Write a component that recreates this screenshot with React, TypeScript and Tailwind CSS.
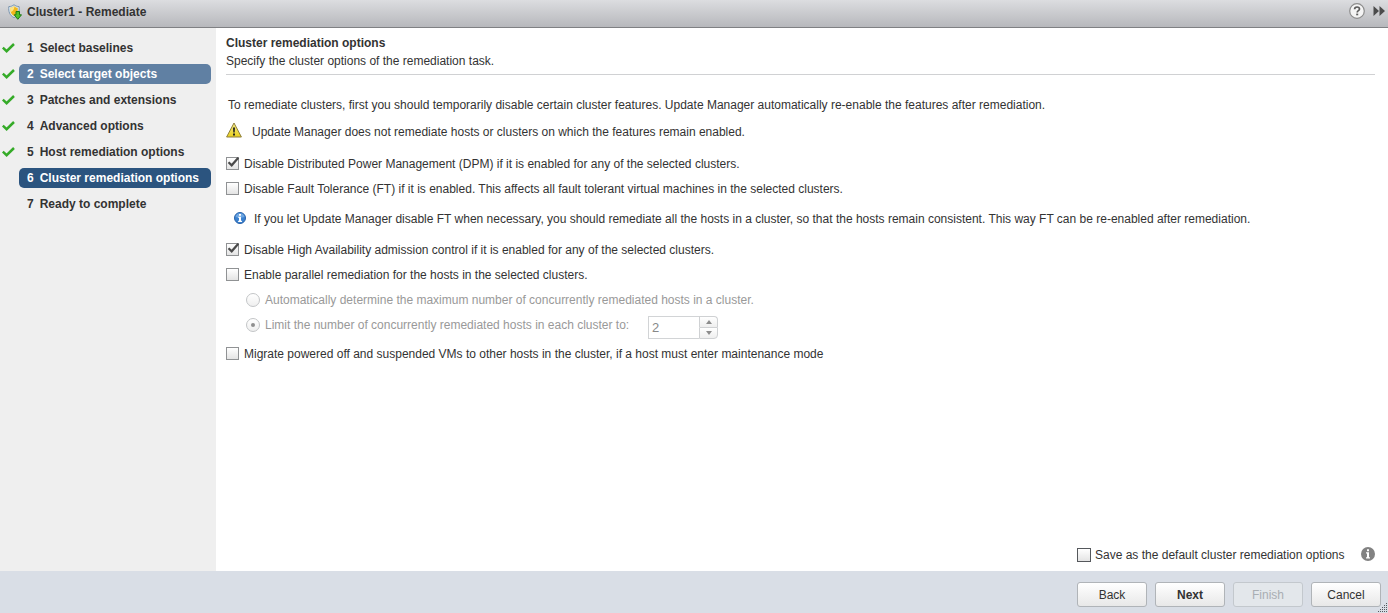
import { useState, type ReactNode } from "react";

const steps = [
  { label: "Select baselines", done: true },
  { label: "Select target objects", done: true, hover: true },
  { label: "Patches and extensions", done: true },
  { label: "Advanced options", done: true },
  { label: "Host remediation options", done: true },
  { label: "Cluster remediation options", done: false, current: true },
  { label: "Ready to complete", done: false },
];

function ShieldIcon() {
  return (
    <svg width="14" height="16" viewBox="0 0 14 16" aria-hidden="true">
      <path d="M6 0.7 C4.6 2 2.8 2.5 0.8 2.6 C0.3 7.5 1.6 11.4 6 13.6 C10.4 11.4 11.6 7.5 11.1 2.6 C9.2 2.5 7.3 2 6 0.7Z" fill="#dbe8f3" stroke="#7b95ad" strokeWidth="1" />
      <path d="M6 2.2 C5 3.1 3.6 3.6 2.1 3.8 C1.9 7.4 2.9 10.3 6 12.1 C9 10.3 10 7.4 9.8 3.8 C8.4 3.6 7 3.1 6 2.2Z" fill="#f2b81c" />
      <path d="M6 2.2 C5 3.1 3.6 3.6 2.1 3.8 L2.2 8 C4 8.5 6 6 6.5 2.6Z" fill="#fbe58a" />
      <path d="M8 7.5 H11.5 V10.8 H13.5 L9.8 15.3 L6.2 10.8 H8Z" fill="#4fc22c" stroke="#1d7a14" strokeWidth="1" />
    </svg>
  );
}

function DoneIcon() {
  return (
    <svg width="13" height="10" viewBox="0 0 13 10" className="block" aria-hidden="true">
      <path d="M0.8 4.6 L4.6 8.2 L12 1" fill="none" stroke="#35ab28" strokeWidth="2.5" />
    </svg>
  );
}

function WarningIcon() {
  return (
    <svg width="16" height="16" viewBox="0 0 16 16" className="mb-1 shrink-0" aria-hidden="true">
      <defs>
        <linearGradient id="warn" x1="0" y1="0" x2="0" y2="1">
          <stop offset="0" stopColor="#f6ee8e" />
          <stop offset="1" stopColor="#e9cf1c" />
        </linearGradient>
      </defs>
      <path d="M8 1 L15.4 15 H0.6Z" fill="url(#warn)" stroke="#8f7f3a" strokeWidth="1" strokeLinejoin="round" />
      <path d="M7 5.5 H9 L8.7 10.5 H7.300Z M7 11.500 H9 V13.500 H7Z" fill="#222" />
    </svg>
  );
}

function BlueInfoIcon() {
  return (
    <svg width="12" height="12" viewBox="0 0 12 12" className="mb-0.5 shrink-0" aria-hidden="true">
      <circle cx="6" cy="6" r="5.5" fill="#3b82d0" stroke="#2a62a8" strokeWidth="1" />
      <path d="M1.5 5 A4.6 4.6 0 0 1 10.5 5 Q6 6.5 1.5 5Z" fill="#6da6e2" />
      <path d="M5 2 H7 V3.7 H5Z M4.2 4.7 H7 V8.8 H8 V9.9 H4.1 V8.8 H5 V5.7 H4.2Z" fill="#fff" />
    </svg>
  );
}

function GrayInfoIcon() {
  return (
    <svg width="14" height="14" viewBox="0 0 14 14" aria-hidden="true">
      <circle cx="7" cy="7" r="7" fill="#828282" />
      <path d="M6 2.2 H8 V4.2 H6Z M5 5.3 H8 V10.2 H9 V11.5 H5 V10.2 H6 V6.5 H5Z" fill="#fff" />
    </svg>
  );
}

type CheckProps = {
  children: ReactNode;
  checked: boolean;
  onChange: (value: boolean) => void;
  prominent?: boolean;
};

function Check({ children, checked, onChange, prominent }: CheckProps) {
  return (
    <label className={`flex min-h-[25px] items-center ${prominent ? "min-w-[274px] gap-1" : "gap-[5px]"}`}>
      <span className="grid shrink-0">
        <input
          type="checkbox"
          checked={checked}
          onChange={(e) => onChange(e.target.checked)}
          className={`appearance-none border bg-linear-to-b from-white to-[#e4e4e4] [grid-area:1/1] ${
            prominent ? "size-3.5 border-[#55585c]" : "size-[13px] border-[#909294]"
          }`}
        />
        {checked && (
          <svg width="13" height="13" viewBox="0 0 13 13" className="pointer-events-none overflow-visible [grid-area:1/1]" aria-hidden="true">
            <path d="M2.5 5.2 L5.7 8.3 L12.3 0.8" fill="none" stroke="#4a4a4a" strokeWidth="2.2" />
          </svg>
        )}
      </span>
      <span>{children}</span>
    </label>
  );
}

type RadioProps = {
  children: ReactNode;
  checked: boolean;
  disabled: boolean;
  onChange: () => void;
};

function Radio({ children, checked, disabled, onChange }: RadioProps) {
  return (
    <label className={`flex min-h-[25px] min-w-[392px] items-center gap-[5px] ${disabled ? "text-[#999]" : ""}`}>
      <span className="grid shrink-0 place-items-center">
        <input
          type="radio"
          name="parallel-mode"
          checked={checked}
          disabled={disabled}
          onChange={onChange}
          className="size-3.5 appearance-none rounded-full border border-[#c3c5c7] bg-linear-to-b from-white to-[#efefef] [grid-area:1/1]"
        />
        {checked && <span className="pointer-events-none size-1 rounded-full bg-[#8f8f8f] [grid-area:1/1]" />}
      </span>
      <span>{children}</span>
    </label>
  );
}

function Stepper({ value, disabled, onChange }: { value: number; disabled: boolean; onChange: (n: number) => void }) {
  const arrow =
    "flex flex-1 items-center justify-center border border-[#cfd1d3] bg-linear-to-b from-white to-[#efefef]";
  return (
    <div className="flex h-[23px] w-[70px]">
      <input
        type="text"
        aria-label="Maximum concurrently remediated hosts"
        value={value}
        disabled={disabled}
        onChange={(e) => onChange(Number(e.target.value) || 1)}
        className="w-[51px] border border-r-0 border-[#d2d4d6] bg-white px-[3px] text-[13px] text-[#888]"
      />
      <div className="flex flex-1 flex-col">
        <button type="button" aria-label="Increase" disabled={disabled} onClick={() => onChange(value + 1)} className={`${arrow} rounded-tr border-b-0`}>
          <svg width="6" height="4" viewBox="0 0 6 4" aria-hidden="true"><path d="M3 0 L6 4 H0Z" fill="#8c8c8c" /></svg>
        </button>
        <button type="button" aria-label="Decrease" disabled={disabled} onClick={() => onChange(Math.max(1, value - 1))} className={`${arrow} rounded-br`}>
          <svg width="6" height="4" viewBox="0 0 6 4" aria-hidden="true"><path d="M3 4 L6 0 H0Z" fill="#8c8c8c" /></svg>
        </button>
      </div>
    </div>
  );
}

function FooterButton({ children, bold, disabled }: { children: ReactNode; bold?: boolean; disabled?: boolean }) {
  return (
    <button
      type="button"
      disabled={disabled}
      className={`h-[25px] w-[70px] rounded-[3px] border ${bold ? "font-bold" : ""} ${
        disabled ? "border-[#c3c8cd] bg-[#e3e7eb] text-[#a9aeb3]" : "border-[#b0b4b8] bg-linear-to-b from-white to-[#e8e8e8]"
      }`}
    >
      {children}
    </button>
  );
}

export default function App() {
  const [dpm, setDpm] = useState(true);
  const [ft, setFt] = useState(false);
  const [ha, setHa] = useState(true);
  const [parallel, setParallel] = useState(false);
  const [mode, setMode] = useState<"auto" | "limit">("limit");
  const [limit, setLimit] = useState(2);
  const [migrate, setMigrate] = useState(false);
  const [save, setSave] = useState(false);

  return (
    <div className="flex min-h-screen flex-col bg-white font-['Liberation_Sans',Arial,sans-serif] text-[12px] leading-[18px] text-[#333]">
      <header className="flex h-7 items-center justify-between border-b border-[#7f8083] bg-linear-to-b from-[#dcdde0] to-[#b7b8bc] pr-[3px] pb-1 pl-2">
        <div className="flex items-center gap-[5px]">
          <ShieldIcon />
          <h1 className="font-bold">Cluster1 - Remediate</h1>
        </div>
        <div className="flex items-center gap-2 pb-0.5">
          <button type="button" aria-label="Help" className="block">
            <svg width="16" height="16" viewBox="0 0 16 16" aria-hidden="true">
              <circle cx="8" cy="8" r="7.3" fill="#f4f4f4" stroke="#8d8d8d" strokeWidth="1.2" />
              <path d="M5.6 6.3 C5.6 3.3 10.5 3.3 10.5 6 C10.5 7.7 8.2 7.7 8.2 9.5" fill="none" stroke="#5c5c5c" strokeWidth="1.7" />
              <path d="M7.2 10.6 H9.2 V12.3 H7.2Z" fill="#5c5c5c" />
            </svg>
          </button>
          <button type="button" aria-label="Minimize" className="block">
            <svg width="12" height="10" viewBox="0 0 12 10" aria-hidden="true">
              <path d="M0.5 0 L6 5 L0.5 10Z M6.5 0 L12 5 L6.5 10Z" fill="#4b4b4b" />
            </svg>
          </button>
        </div>
      </header>

      <div className="flex flex-1">
        <nav aria-label="Steps" className="w-[216px] shrink-0 bg-[#efefef] pt-2.5 pr-[5px] pl-0.5">
          <ol className="flex flex-col gap-1.5">
            {steps.map((step, i) => (
              <li key={step.label} className="flex items-center gap-1">
                <span className="w-[13px] shrink-0">{step.done && <DoneIcon />}</span>
                <button
                  type="button"
                  aria-current={step.current ? "step" : undefined}
                  className={`flex h-5 flex-1 items-center gap-1.5 rounded-[5px] px-2 text-left font-bold ${
                    step.current ? "bg-[#2b547f] text-white" : step.hover ? "bg-[#6080a3] text-white" : ""
                  }`}
                >
                  <span>{i + 1}</span>
                  <span>{step.label}</span>
                </button>
              </li>
            ))}
          </ol>
        </nav>

        <main className="flex flex-1 flex-col pt-1.5 pr-[13px] pb-1 pl-2.5">
          <div className="border-b border-[#d0d1d3] pb-1">
            <h2 className="font-bold">Cluster remediation options</h2>
            <p>Specify the cluster options of the remediation task.</p>
          </div>

          <p className="mt-[21px] pl-0.5">
            To remediate clusters, first you should temporarily disable certain cluster features. Update Manager
            automatically re-enable the features after remediation.
          </p>
          <div className="mt-2 flex items-center gap-2.5">
            <WarningIcon />
            <p>Update Manager does not remediate hosts or clusters on which the features remain enabled.</p>
          </div>

          <div className="mt-[9px]">
            <Check checked={dpm} onChange={setDpm}>
              Disable Distributed Power Management (DPM) if it is enabled for any of the selected clusters.
            </Check>
            <Check checked={ft} onChange={setFt}>
              Disable Fault Tolerance (FT) if it is enabled. This affects all fault tolerant virtual machines in the
              selected clusters.
            </Check>
            <div className="my-[9px] flex items-center gap-2 pl-2">
              <BlueInfoIcon />
              <p>
                If you let Update Manager disable FT when necessary, you should remediate all the hosts in a cluster, so
                that the hosts remain consistent. This way FT can be re-enabled after remediation.
              </p>
            </div>
            <Check checked={ha} onChange={setHa}>
              Disable High Availability admission control if it is enabled for any of the selected clusters.
            </Check>
            <Check checked={parallel} onChange={setParallel}>
              Enable parallel remediation for the hosts in the selected clusters.
            </Check>
            <div className="pl-5">
              <Radio checked={mode === "auto"} disabled={!parallel} onChange={() => setMode("auto")}>
                Automatically determine the maximum number of concurrently remediated hosts in a cluster.
              </Radio>
              <div className="flex items-start gap-2.5">
                <Radio checked={mode === "limit"} disabled={!parallel} onChange={() => setMode("limit")}>
                  Limit the number of concurrently remediated hosts in each cluster to:
                </Radio>
                <div className="pt-1 pb-0.5">
                  <Stepper value={limit} disabled={!parallel || mode !== "limit"} onChange={setLimit} />
                </div>
              </div>
            </div>
            <Check checked={migrate} onChange={setMigrate}>
              Migrate powered off and suspended VMs to other hosts in the cluster, if a host must enter maintenance mode
            </Check>
          </div>

          <div className="mt-auto flex items-center justify-end gap-2.5">
            <Check checked={save} onChange={setSave} prominent>
              Save as the default cluster remediation options
            </Check>
            <button type="button" aria-label="About the default options" className="block pb-0.5">
              <GrayInfoIcon />
            </button>
          </div>
        </main>
      </div>

      <footer className="relative flex justify-end gap-2 bg-[#d9dee6] pt-[11px] pr-[7px] pb-1.5">
        <FooterButton>Back</FooterButton>
        <FooterButton bold>Next</FooterButton>
        <FooterButton disabled>Finish</FooterButton>
        <FooterButton>Cancel</FooterButton>
        <svg width="10" height="10" viewBox="0 0 10 10" className="absolute right-0 bottom-0" aria-hidden="true">
          {[0, 1, 2, 3, 4].flatMap((row) =>
            Array.from({ length: row + 1 }, (_, col) => (
              <rect key={`${row}-${col}`} x={8 - col * 2} y={row * 2} width="1" height="1" fill="#55595e" />
            )),
          )}
        </svg>
      </footer>
    </div>
  );
}
